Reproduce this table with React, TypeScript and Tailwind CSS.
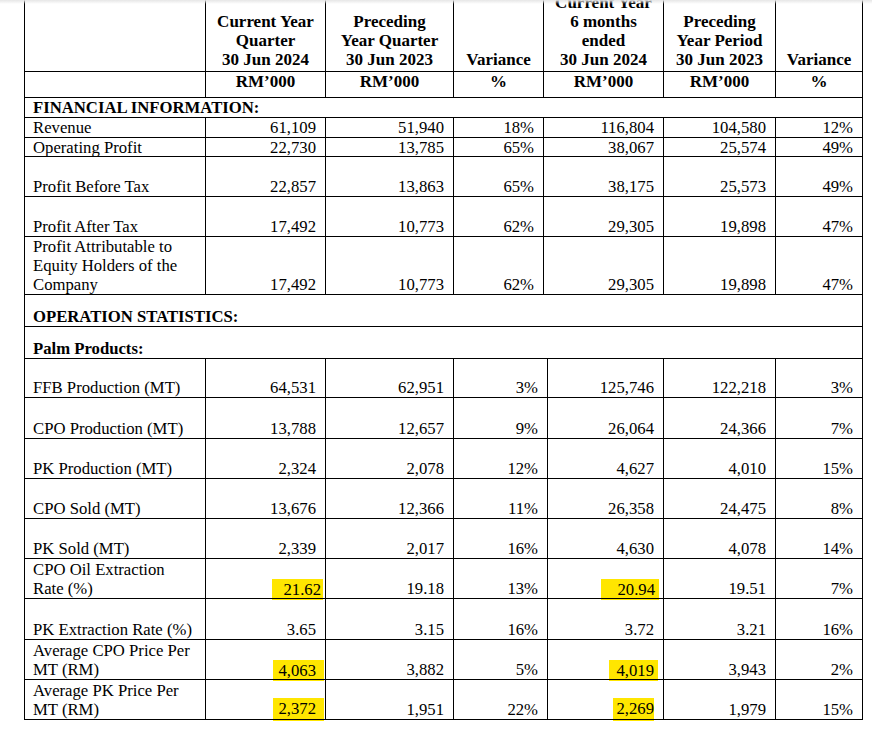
import React from "react";

type Hl = { v: string; cls: string };
type Cell = string | Hl;

type Row =
  | { kind: "span"; label: string; h: string }
  | { kind: "data"; label: React.ReactNode; h: string; cells: Cell[]; palm?: boolean };

const FIN_COLS = "grid grid-cols-[181px_120px_128px_90px_120px_112px_87px]";
const PALM_COLS = "grid grid-cols-[181px_120px_128px_94px_116px_112px_87px]";

const rows: Row[] = [
  { kind: "span", label: "FINANCIAL INFORMATION:", h: "h-[20px]" },
  { kind: "data", label: "Revenue", h: "h-[20px]", cells: ["61,109", "51,940", "18%", "116,804", "104,580", "12%"] },
  { kind: "data", label: "Operating Profit", h: "h-[19px]", cells: ["22,730", "13,785", "65%", "38,067", "25,574", "49%"] },
  { kind: "data", label: "Profit Before Tax", h: "h-[40px]", cells: ["22,857", "13,863", "65%", "38,175", "25,573", "49%"] },
  { kind: "data", label: "Profit After Tax", h: "h-[40px]", cells: ["17,492", "10,773", "62%", "29,305", "19,898", "47%"] },
  {
    kind: "data",
    label: (
      <>
        Profit Attributable to
        <br />
        Equity Holders of the
        <br />
        Company
      </>
    ),
    h: "h-[58px]",
    cells: ["17,492", "10,773", "62%", "29,305", "19,898", "47%"],
  },
  { kind: "span", label: "OPERATION STATISTICS:", h: "h-[32px]" },
  { kind: "span", label: "Palm Products:", h: "h-[32px]" },
  { kind: "data", palm: true, label: "FFB Production (MT)", h: "h-[39px]", cells: ["64,531", "62,951", "3%", "125,746", "122,218", "3%"] },
  { kind: "data", palm: true, label: "CPO Production (MT)", h: "h-[41px]", cells: ["13,788", "12,657", "9%", "26,064", "24,366", "7%"] },
  { kind: "data", palm: true, label: "PK Production (MT)", h: "h-[40px]", cells: ["2,324", "2,078", "12%", "4,627", "4,010", "15%"] },
  { kind: "data", palm: true, label: "CPO Sold (MT)", h: "h-[40px]", cells: ["13,676", "12,366", "11%", "26,358", "24,475", "8%"] },
  { kind: "data", palm: true, label: "PK Sold (MT)", h: "h-[40px]", cells: ["2,339", "2,017", "16%", "4,630", "4,078", "14%"] },
  {
    kind: "data",
    palm: true,
    label: (
      <>
        CPO Oil Extraction
        <br />
        Rate (%)
      </>
    ),
    h: "h-[40px]",
    cells: [
      { v: "21.62", cls: "pl-[11px] pr-[2px] -mr-[7px]" },
      "19.18",
      "13%",
      { v: "20.94", cls: "pl-[16px] pr-[4px] -mr-[5px]" },
      "19.51",
      "7%",
    ],
  },
  { kind: "data", palm: true, label: "PK Extraction Rate (%)", h: "h-[41px]", cells: ["3.65", "3.15", "16%", "3.72", "3.21", "16%"] },
  {
    kind: "data",
    palm: true,
    label: (
      <>
        Average CPO Price Per
        <br />
        MT (RM)
      </>
    ),
    h: "h-[40px]",
    cells: [
      { v: "4,063", cls: "pl-[5px] pr-[8px] -mr-[8px]" },
      "3,882",
      "5%",
      { v: "4,019", cls: "pl-[7px] pr-[4px] -mr-[4px]" },
      "3,943",
      "2%",
    ],
  },
  {
    kind: "data",
    palm: true,
    label: (
      <>
        Average PK Price Per
        <br />
        MT (RM)
      </>
    ),
    h: "h-[40px]",
    cells: [
      { v: "2,372", cls: "pl-[5px] pr-[8px] -mr-[8px] pb-[3px]" },
      "1,951",
      "22%",
      { v: "2,269", cls: "pl-[3px] pr-[0px] pb-[3px]" },
      "1,979",
      "15%",
    ],
  },
];

const headTop: string[][] = [
  [],
  ["Current Year", "Quarter", "30 Jun 2024"],
  ["Preceding", "Year Quarter", "30 Jun 2023"],
  ["Variance"],
  ["Current Year", "6 months", "ended", "30 Jun 2024"],
  ["Preceding", "Year Period", "30 Jun 2023"],
  ["Variance"],
];

const headUnits = ["", "RM’000", "RM’000", "%", "RM’000", "RM’000", "%"];

function NumCell({ c }: { c: Cell }) {
  if (typeof c === "string") {
    return <div className="flex items-end justify-end pr-[9px] border-r border-black">{c}</div>;
  }
  return (
    <div className="flex items-end justify-end pr-[9px] border-r border-black">
      <span className={"relative -z-10 top-[2px] bg-[#ffe600] pt-[1px] pb-[1px] " + c.cls}>{c.v}</span>
    </div>
  );
}

export default function App() {
  return (
    <div className="relative w-[872px] h-[732px] overflow-hidden bg-white text-black font-['Liberation_Serif',serif] text-[16.7px] leading-[19px]">
      <div className="pointer-events-none absolute left-0 top-0 z-20 h-[4px] w-full bg-gradient-to-b from-[#e6e6e6] to-transparent" />
      <div className="relative isolate z-0 ml-[24px] -mt-[12px] w-[839px] border-l border-black">
        <div className={FIN_COLS + " h-[84px] border-b border-black font-bold text-[17px]"}>
          {headTop.map((lines, i) => (
            <div key={i} className="flex flex-col items-center justify-end pb-[2px] text-center border-r border-black">
              {lines.map((l, j) => (
                <div key={j} className="whitespace-nowrap">
                  {l}
                </div>
              ))}
            </div>
          ))}
        </div>
        <div className={FIN_COLS + " h-[26px] border-b border-black font-bold text-[17px]"}>
          {headUnits.map((u, i) => (
            <div key={i} className="text-center border-r border-black">
              {u}
            </div>
          ))}
        </div>
        {rows.map((r, idx) =>
          r.kind === "span" ? (
            <div key={idx} className={"flex items-end border-b border-r border-black pl-2 font-bold " + r.h}>
              {r.label}
            </div>
          ) : (
            <div key={idx} className={(r.palm ? PALM_COLS : FIN_COLS) + " border-b border-black " + r.h}>
              <div className="flex items-end pl-2 border-r border-black">
                <div className="whitespace-nowrap">{r.label}</div>
              </div>
              {r.cells.map((c, i) => (
                <NumCell key={i} c={c} />
              ))}
            </div>
          )
        )}
      </div>
    </div>
  );
}
